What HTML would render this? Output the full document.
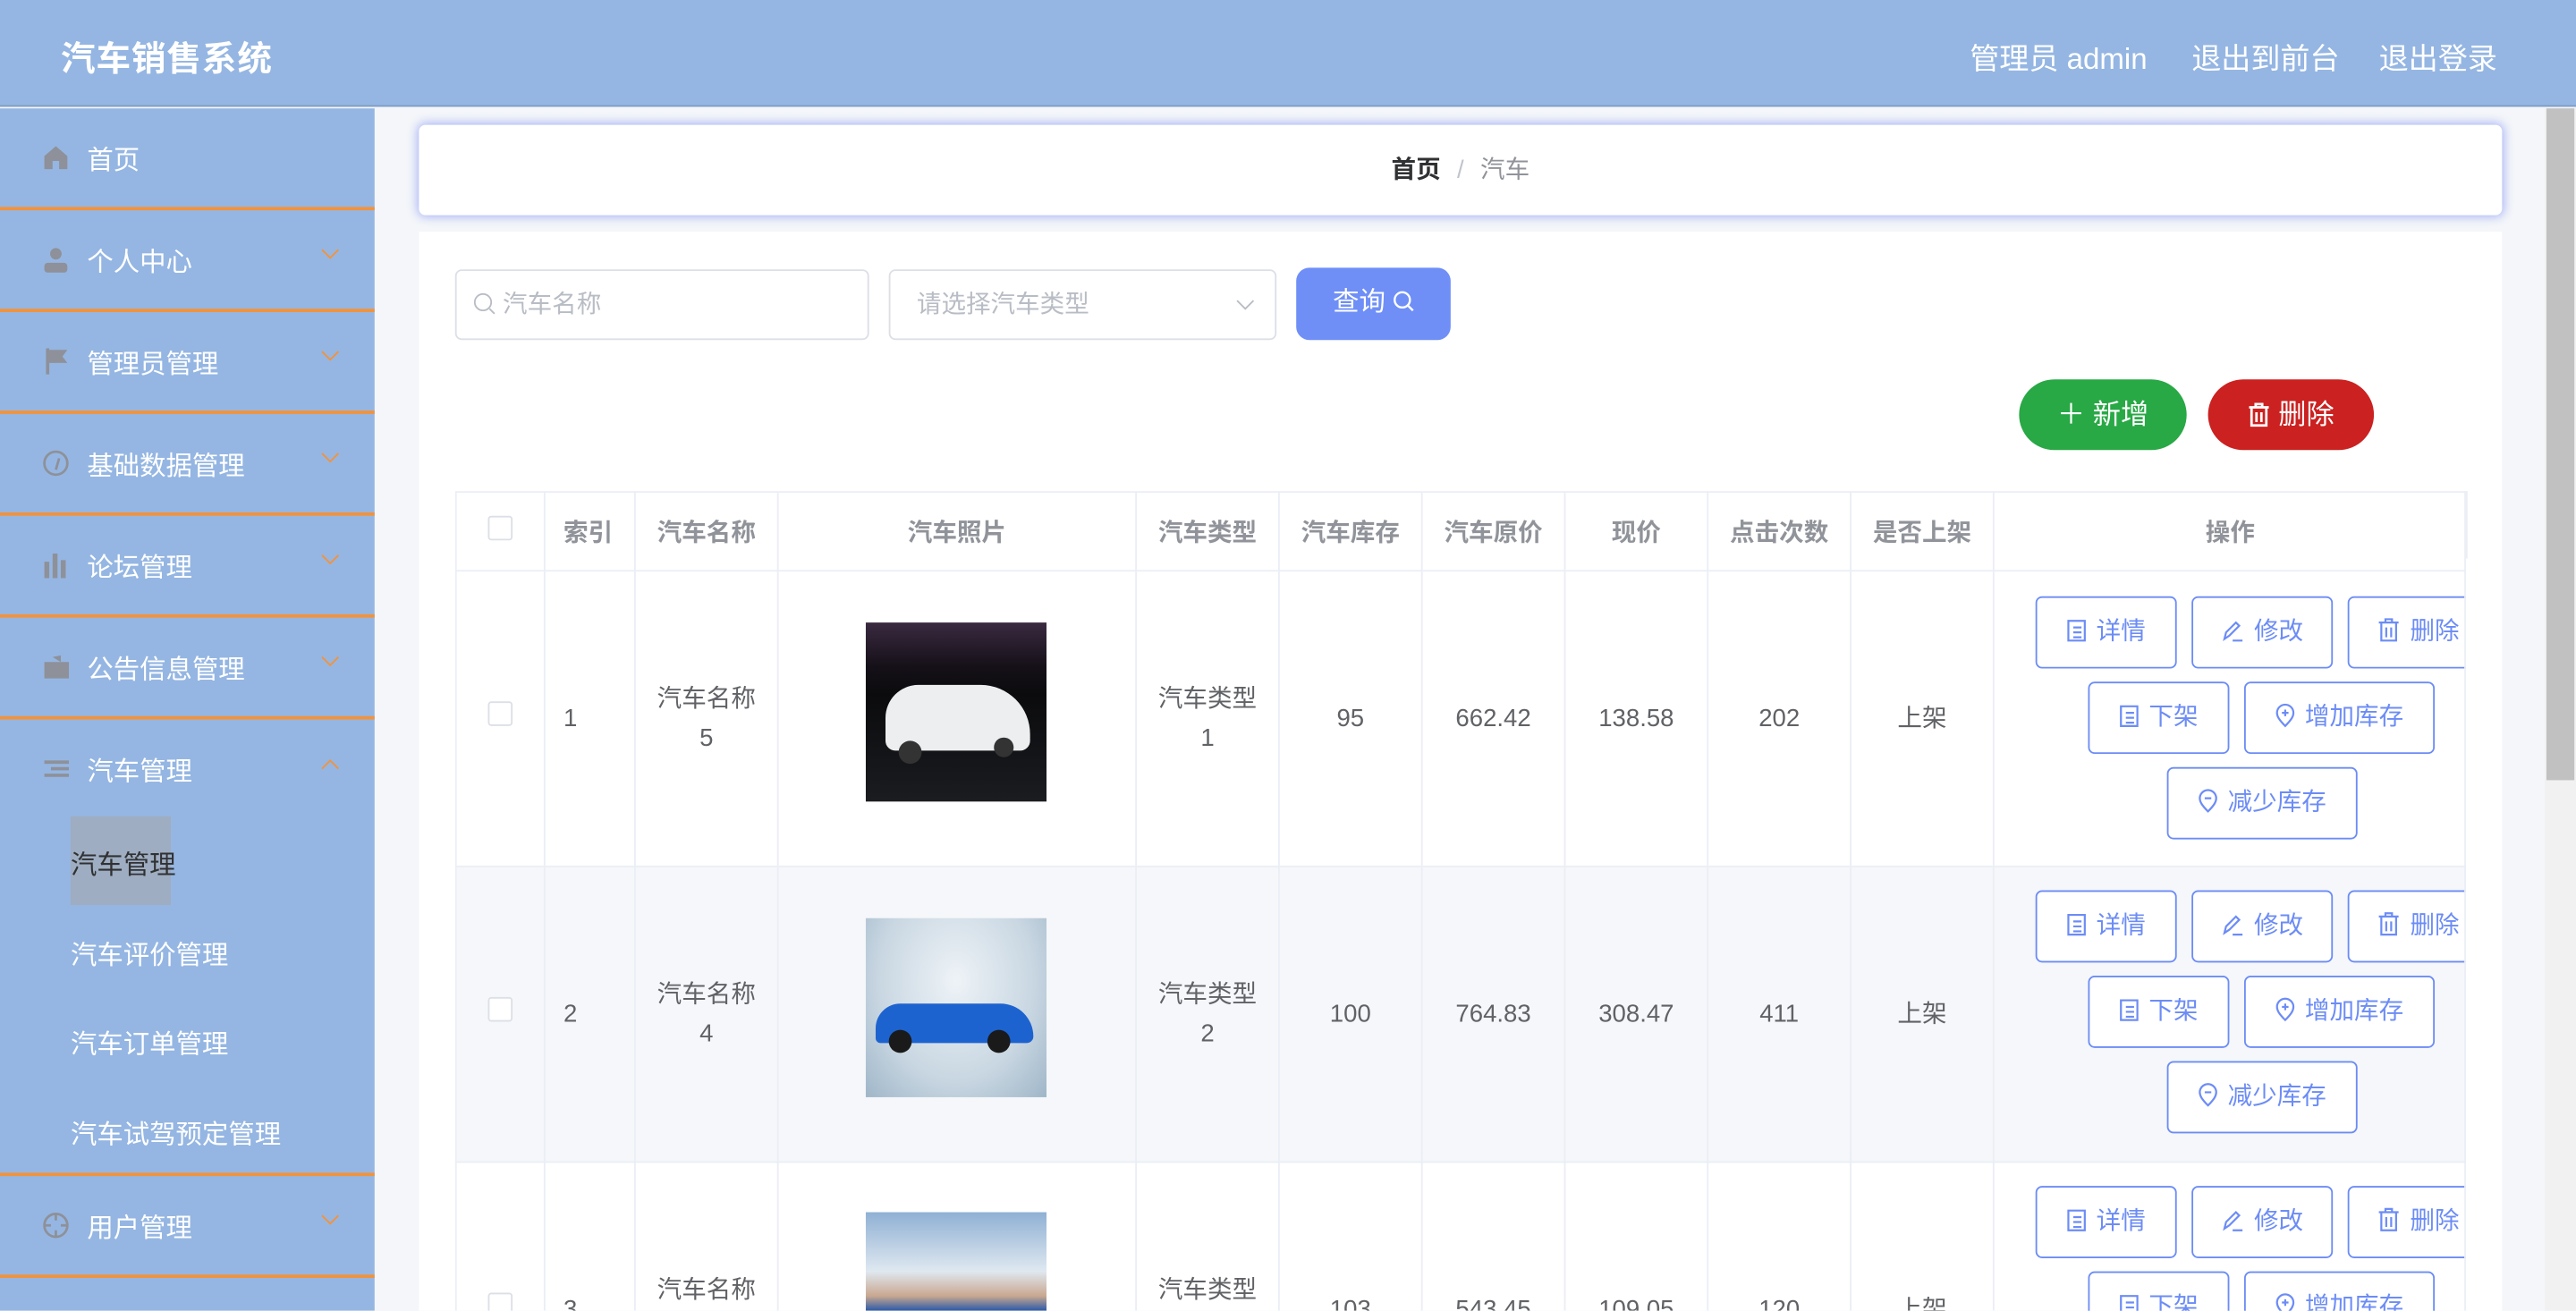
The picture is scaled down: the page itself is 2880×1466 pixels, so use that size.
<!DOCTYPE html>
<html><head><meta charset="utf-8">
<style>
*{margin:0;padding:0;box-sizing:border-box}
html,body{width:2880px;height:1466px;overflow:hidden;background:#f4f6f9}
body{font-family:"Liberation Sans","Noto Sans CJK SC",sans-serif}
#w{position:absolute;left:0;top:0;width:1568px;height:798px;transform:scale(1.836735);transform-origin:0 0;background:#f4f6f9;overflow:hidden}
.abs{position:absolute}
#hdr{left:0;top:0;width:1568px;height:65px;background:#95b6e2;border-bottom:1px solid #7f9cc4}
#hdr .t{left:37px;top:20px;font-size:21px;font-weight:bold;color:#fff;letter-spacing:0.5px}
#hdr .r{top:22px;font-size:18px;color:#fff}
#side{left:0;top:66px;width:228px;height:732px;background:#95b6e2}
.mi{position:absolute;left:0;width:228px;height:62px;border-bottom:2px solid #f3923a;color:#fff;font-size:16px}
.mi span{position:absolute;left:53px;top:18px}
.mi svg.ic{position:absolute;left:26px;top:22px}
.mi .ch{position:absolute;left:195px;top:23px}
.sub{position:absolute;color:#fff;font-size:16px;left:43px}
#main{left:229px;top:66px;width:1320px;height:732px;background:#f4f6f9}
#bc{left:255px;top:76px;width:1268px;height:55px;background:#fff;border-radius:4px;box-shadow:0 0 6px 1px #a9b4f5;font-size:15px;text-align:center;line-height:55px;color:#303133}
#card{left:255px;top:141px;width:1268px;height:660px;background:#fff}
.inp{position:absolute;top:164px;height:43px;border:1px solid #dcdfe6;border-radius:4px;background:#fff;color:#b8bcc4;font-size:15px;line-height:41px}
.btn{position:absolute;color:#fff;font-size:17px;text-align:center}
#tw{position:absolute;left:277px;top:299px;width:1272px;height:499px;overflow:hidden}
table{border-collapse:collapse;table-layout:fixed;font-size:15px;color:#606266}
td,th{border:1px solid #ebeef5;text-align:center;vertical-align:middle;padding:0}
th{height:48px;color:#909399;font-weight:bold}
td{height:180px;line-height:24px}
tr.s td{background:#f5f7fa}
.cb{display:inline-block;width:15px;height:15px;border:1px solid #dcdfe6;border-radius:2px;background:#fff}
.ab{position:absolute;height:44px;border:1px solid #6c8cf6;border-radius:4px;color:#6c8cf6;font-size:15px;line-height:42px;text-align:center;background:#fff}
.ab svg{vertical-align:-2px;margin-right:6px}
.img{position:absolute;left:527px;width:110px;height:109px}
</style></head><body><div id="w">
<div id="hdr" class="abs">
<div class="abs t">汽车销售系统</div>
<div class="abs r" style="left:1199px">管理员 admin</div>
<div class="abs r" style="left:1334px">退出到前台</div>
<div class="abs r" style="left:1448px">退出登录</div>
</div>
<div id="side" class="abs">
<div class="mi" style="top:0"><svg class="ic" width="16" height="16" viewBox="0 0 16 16"><path d="M8 1L1 7v8h5v-5h4v5h5V7z" fill="#8e9199"/></svg><span>首页</span></div>
<div class="mi" style="top:62px"><svg class="ic" width="16" height="16" viewBox="0 0 16 16"><circle cx="8" cy="4.5" r="3.5" fill="#8e9199"/><rect x="1" y="10" width="14" height="6" rx="2" fill="#8e9199"/></svg><span>个人中心</span><svg class="ch" width="12" height="8" viewBox="0 0 12 8"><path d="M1 1l5 5 5-5" stroke="#f3923a" fill="none"/></svg></div>
<div class="mi" style="top:124px"><svg class="ic" width="16" height="16" viewBox="0 0 16 16"><path d="M2 0h2v16H2z M4 1h11l-3 4 3 4H4z" fill="#8e9199"/></svg><span>管理员管理</span><svg class="ch" width="12" height="8" viewBox="0 0 12 8"><path d="M1 1l5 5 5-5" stroke="#f3923a" fill="none"/></svg></div>
<div class="mi" style="top:186px"><svg class="ic" width="16" height="16" viewBox="0 0 16 16"><circle cx="8" cy="8" r="7" stroke="#8e9199" stroke-width="1.5" fill="none"/><path d="M8 12l2-7" stroke="#8e9199" stroke-width="1.5"/></svg><span>基础数据管理</span><svg class="ch" width="12" height="8" viewBox="0 0 12 8"><path d="M1 1l5 5 5-5" stroke="#f3923a" fill="none"/></svg></div>
<div class="mi" style="top:248px"><svg class="ic" width="16" height="16" viewBox="0 0 16 16"><path d="M1 6h3v10H1zM6 1h3v15H6zM11 5h3v11h-3z" fill="#8e9199"/></svg><span>论坛管理</span><svg class="ch" width="12" height="8" viewBox="0 0 12 8"><path d="M1 1l5 5 5-5" stroke="#f3923a" fill="none"/></svg></div>
<div class="mi" style="top:310px"><svg class="ic" width="16" height="16" viewBox="0 0 16 16"><path d="M1 5h15v10H1z M6 2l5-1v4" fill="#8e9199"/></svg><span>公告信息管理</span><svg class="ch" width="12" height="8" viewBox="0 0 12 8"><path d="M1 1l5 5 5-5" stroke="#f3923a" fill="none"/></svg></div>
<div class="mi" style="top:372px;height:278px"><svg class="ic" width="16" height="16" viewBox="0 0 16 16"><path d="M1 3h15v2H1zM5 7h11v2H5zM1 11h15v2H1z" fill="#8e9199"/></svg><span>汽车管理</span><svg class="ch" width="12" height="8" viewBox="0 0 12 8"><path d="M1 7l5-5 5 5" stroke="#f3923a" fill="none"/></svg></div>
<div class="abs" style="left:43px;top:431px;width:61px;height:54px;background:#9eadc1"></div>
<div class="sub" style="top:447px;color:#303133">汽车管理</div>
<div class="sub" style="top:502px">汽车评价管理</div>
<div class="sub" style="top:556px">汽车订单管理</div>
<div class="sub" style="top:611px">汽车试驾预定管理</div>
<div class="mi" style="top:650px"><svg class="ic" width="16" height="16" viewBox="0 0 16 16"><circle cx="8" cy="8" r="7" stroke="#8e9199" stroke-width="1.5" fill="none"/><path d="M8 1v4M8 11v4M1 8h4M11 8h4" stroke="#8e9199" stroke-width="1.5"/></svg><span>用户管理</span><svg class="ch" width="12" height="8" viewBox="0 0 12 8"><path d="M1 1l5 5 5-5" stroke="#f3923a" fill="none"/></svg></div>
</div>
<div id="main" class="abs"></div>
<div class="abs" style="left:1549px;top:66px;width:19px;height:732px;background:#f1f1f1"></div>
<div class="abs" style="left:1550px;top:66px;width:17px;height:409px;background:#c1c1c1"></div>
<div id="bc" class="abs"><b>首页</b><span style="color:#c0c4cc;margin:0 10px">/</span><span style="color:#909399">汽车</span></div>
<div id="card" class="abs"></div>
<div class="inp" style="left:277px;width:252px;padding-left:10px"><svg width="14" height="14" viewBox="0 0 14 14" style="vertical-align:-2px;margin-right:4px"><circle cx="6" cy="6" r="5" stroke="#b8bcc4" fill="none"/><path d="M10 10l3 3" stroke="#b8bcc4"/></svg>汽车名称</div>
<div class="inp" style="left:541px;width:236px;padding-left:16px">请选择汽车类型<svg width="12" height="8" viewBox="0 0 12 8" style="position:absolute;right:12px;top:17px"><path d="M1 1l5 5 5-5" stroke="#b8bcc4" fill="none"/></svg></div>
<div class="btn" style="left:789px;top:163px;width:94px;height:44px;background:#6f8ff7;border-radius:8px;line-height:44px;font-size:16px">查询 <svg width="13" height="13" viewBox="0 0 14 14" style="vertical-align:-1px"><circle cx="6" cy="6" r="5" stroke="#fff" fill="none" stroke-width="1.4"/><path d="M10 10l3 3" stroke="#fff" stroke-width="1.4"/></svg></div>
<div class="btn" style="left:1229px;top:231px;width:102px;height:43px;background:#29a846;border-radius:22px;line-height:43px">＋ 新增</div>
<div class="btn" style="left:1344px;top:231px;width:101px;height:43px;background:#cb2121;border-radius:22px;line-height:43px"><svg width="14" height="15" viewBox="0 0 14 15" style="vertical-align:-2px"><path d="M1 3h12M5 3V1h4v2M2.5 3v11h9V3M5.5 6v6M8.5 6v6" stroke="#fff" fill="none" stroke-width="1.5"/></svg> 删除</div>
<div id="tw"><table>
<colgroup><col style="width:54px"><col style="width:55px"><col style="width:87px"><col style="width:218px"><col style="width:87px"><col style="width:87px"><col style="width:87px"><col style="width:87px"><col style="width:87px"><col style="width:87px"><col style="width:288px"></colgroup>
<tr><th><span class="cb"></span></th><th style="text-align:left;padding-left:11px">索引</th><th>汽车名称</th><th>汽车照片</th><th>汽车类型</th><th>汽车库存</th><th>汽车原价</th><th>现价</th><th>点击次数</th><th>是否上架</th><th>操作</th></tr>
<tr><td><span class="cb"></span></td><td style="text-align:left;padding-left:11px">1</td><td>汽车名称<br>5</td><td></td><td>汽车类型<br>1</td><td>95</td><td>662.42</td><td>138.58</td><td>202</td><td>上架</td><td></td></tr>
<tr class="s"><td><span class="cb"></span></td><td style="text-align:left;padding-left:11px">2</td><td>汽车名称<br>4</td><td></td><td>汽车类型<br>2</td><td>100</td><td>764.83</td><td>308.47</td><td>411</td><td>上架</td><td></td></tr>
<tr><td><span class="cb"></span></td><td style="text-align:left;padding-left:11px">3</td><td>汽车名称<br>3</td><td></td><td>汽车类型<br>3</td><td>103</td><td>543.45</td><td>109.05</td><td>120</td><td>上架</td><td></td></tr>
</table></div>
<div class="img" style="top:379px;background:linear-gradient(180deg,#3a2a40 0%,#151018 25%,#0b0b0d 40%,#1a1c20 100%)"><div style="position:absolute;left:12px;top:38px;width:88px;height:40px;background:#eceef0;border-radius:20px 30px 6px 6px"></div><div style="position:absolute;left:20px;top:72px;width:14px;height:14px;border-radius:7px;background:#333"></div><div style="position:absolute;left:78px;top:70px;width:12px;height:12px;border-radius:6px;background:#333"></div></div>
<div class="img" style="top:559px;background:radial-gradient(ellipse at 50% 35%,#eef3f7 0%,#c9d7e2 60%,#9fb6c8 100%)"><div style="position:absolute;left:6px;top:52px;width:96px;height:24px;background:#1d63d0;border-radius:30px 40px 8px 6px"></div><div style="position:absolute;left:14px;top:68px;width:14px;height:14px;border-radius:7px;background:#1a1a1a"></div><div style="position:absolute;left:74px;top:68px;width:14px;height:14px;border-radius:7px;background:#1a1a1a"></div></div>
<div class="img" style="top:738px;height:60px;background:linear-gradient(180deg,#8fb0d4 0%,#dfe8f0 60%,#c9a890 85%,#2b5aa8 100%)"></div>
<svg width="0" height="0" style="position:absolute"><defs>
<symbol id="doc" viewBox="0 0 12 14"><path d="M1 1h10v12H1zM4 5h5M4 8h5M4 11h5" stroke="#6c8cf6" fill="none" stroke-width="1.2"/></symbol>
<symbol id="pen" viewBox="0 0 14 14"><path d="M2 12l1-4 6-6 2 2-6 6z M7 13h6" stroke="#6c8cf6" fill="none" stroke-width="1.2"/></symbol>
<symbol id="bin" viewBox="0 0 14 15"><path d="M1 3h12M5 3V1h4v2M2.5 3v11h9V3M5.5 6v6M8.5 6v6" stroke="#6c8cf6" fill="none" stroke-width="1.2"/></symbol>
<symbol id="pin" viewBox="0 0 12 15"><path d="M6 14C2 10 1 8 1 6a5 5 0 0 1 10 0c0 2-1 4-5 8zM4 6h4M6 4v4" stroke="#6c8cf6" fill="none" stroke-width="1.2"/></symbol>
<symbol id="pinm" viewBox="0 0 12 15"><path d="M6 14C2 10 1 8 1 6a5 5 0 0 1 10 0c0 2-1 4-5 8zM4 6h4" stroke="#6c8cf6" fill="none" stroke-width="1.2"/></symbol>
</defs></svg>
<div style="position:absolute;left:0;top:0">
<div class="ab" style="left:1239px;top:363px;width:86px"><svg width="12" height="14"><use href="#doc"/></svg>详情</div>
<div class="ab" style="left:1334px;top:363px;width:86px"><svg width="14" height="14"><use href="#pen"/></svg>修改</div>
<div class="ab" style="left:1429px;top:363px;width:80px;text-align:left;padding-left:17px"><svg width="14" height="15"><use href="#bin"/></svg>删除</div>
<div class="ab" style="left:1271px;top:415px;width:86px"><svg width="12" height="14"><use href="#doc"/></svg>下架</div>
<div class="ab" style="left:1366px;top:415px;width:116px"><svg width="12" height="15"><use href="#pin"/></svg>增加库存</div>
<div class="ab" style="left:1319px;top:467px;width:116px"><svg width="12" height="15"><use href="#pinm"/></svg>减少库存</div>
<div class="ab" style="left:1239px;top:542px;width:86px"><svg width="12" height="14"><use href="#doc"/></svg>详情</div>
<div class="ab" style="left:1334px;top:542px;width:86px"><svg width="14" height="14"><use href="#pen"/></svg>修改</div>
<div class="ab" style="left:1429px;top:542px;width:80px;text-align:left;padding-left:17px"><svg width="14" height="15"><use href="#bin"/></svg>删除</div>
<div class="ab" style="left:1271px;top:594px;width:86px"><svg width="12" height="14"><use href="#doc"/></svg>下架</div>
<div class="ab" style="left:1366px;top:594px;width:116px"><svg width="12" height="15"><use href="#pin"/></svg>增加库存</div>
<div class="ab" style="left:1319px;top:646px;width:116px"><svg width="12" height="15"><use href="#pinm"/></svg>减少库存</div>
<div class="ab" style="left:1239px;top:722px;width:86px"><svg width="12" height="14"><use href="#doc"/></svg>详情</div>
<div class="ab" style="left:1334px;top:722px;width:86px"><svg width="14" height="14"><use href="#pen"/></svg>修改</div>
<div class="ab" style="left:1429px;top:722px;width:80px;text-align:left;padding-left:17px"><svg width="14" height="15"><use href="#bin"/></svg>删除</div>
<div class="ab" style="left:1271px;top:774px;width:86px"><svg width="12" height="14"><use href="#doc"/></svg>下架</div>
<div class="ab" style="left:1366px;top:774px;width:116px"><svg width="12" height="15"><use href="#pin"/></svg>增加库存</div>
</div>
<div class="abs" style="left:1501px;top:340px;width:48px;height:458px;background:#fff"></div>
<div class="abs" style="left:1500px;top:299px;width:1px;height:499px;background:#ebeef5"></div>
<div class="abs" style="left:1523px;top:141px;width:26px;height:657px;background:#f4f6f9"></div>
</div></body></html>
